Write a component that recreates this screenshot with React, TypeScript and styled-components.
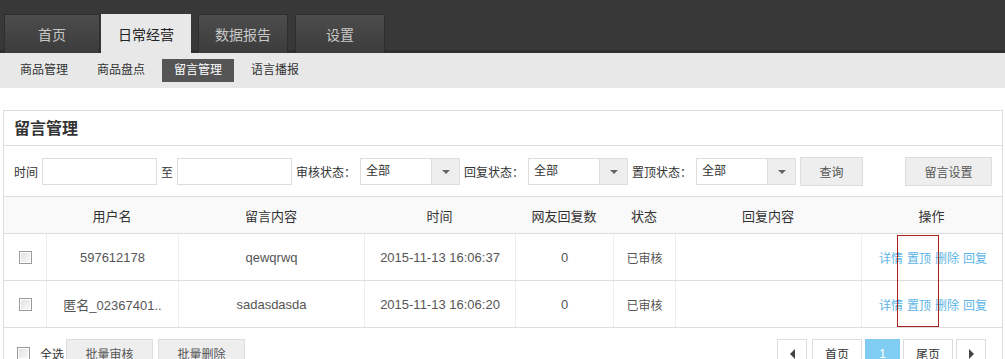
import { createGlobalStyle } from "styled-components"
import styled from "styled-components"

const GlobalStyle = createGlobalStyle`
    html, body {
        margin: 0;
        padding: 0;
        background: #fff;
        font-family: "Liberation Sans", "Noto Sans CJK SC", sans-serif;
        color: #333;
        overflow: hidden;
    }
`

const Page = styled.div`
    width: 1005px;
    height: 359px;
    overflow: hidden;
`

const TopBar = styled.div`
    height: 53px;
    background: #383838;
    display: flex;
    align-items: flex-end;
    padding-left: 4px;
    box-sizing: border-box;
    box-shadow: inset 0 -3px 0 #2f2f2f;
`

const Tab = styled.div<{ $active?: boolean, $w?: number, $gap?: number }>`
    width: ${p => p.$w || 90}px;
    margin-right: ${p => p.$gap ?? 7}px;
    height: 39px;
    display: flex;
    align-items: center;
    justify-content: center;
    font-size: 14px;
    box-sizing: border-box;
    color: ${p => p.$active ? "#222" : "#c8c8c8"};
    background: ${p => p.$active ? "#e8e8e8" : "linear-gradient(#4c4c4c, #3c3c3c)"};
    border: ${p => p.$active ? "none" : "1px solid #2e2e2e"};
    border-bottom: none;
`

const SubNav = styled.div`
    height: 35px;
    background: #e8e8e8;
    display: flex;
    align-items: center;
    padding-left: 8px;
    gap: 5px;
`

const SubItem = styled.div<{ $active?: boolean }>`
    width: 72px;
    height: 23px;
    line-height: 23px;
    text-align: center;
    font-size: 12px;
    color: ${p => p.$active ? "#fff" : "#333"};
    background: ${p => p.$active ? "#555" : "transparent"};
`

const Panel = styled.div`
    margin: 22px 2px 0 3px;
    border: 1px solid #ddd;
    border-bottom: none;
`

const PanelTitle = styled.div`
    height: 34px;
    line-height: 36px;
    padding-left: 10px;
    font-size: 16px;
    font-weight: bold;
    color: #333;
    border-bottom: 1px solid #ddd;
`

const Filter = styled.div`
    height: 50px;
    display: flex;
    align-items: center;
    gap: 4px;
    padding: 0 10px;
    border-bottom: 1px solid #ddd;
    font-size: 12px;
    color: #333;
`

const TextInput = styled.div`
    width: 115px;
    height: 27px;
    box-sizing: border-box;
    border: 1px solid #ddd;
    background: #fff;
`

const Select = styled.div`
    width: 100px;
    height: 27px;
    box-sizing: border-box;
    border: 1px solid #ddd;
    display: flex;
    font-size: 12px;
    color: #333;
`

const SelectValue = styled.div`
    flex: 1;
    padding-left: 5px;
    line-height: 25px;
`

const SelectArrow = styled.div`
    width: 27px;
    background: #eee;
    border-left: 1px solid #ddd;
    display: flex;
    align-items: center;
    justify-content: center;
    &::after {
        content: "";
        border-left: 4px solid transparent;
        border-right: 4px solid transparent;
        border-top: 4px solid #666;
        margin-top: 1px;
    }
`

const Button = styled.div<{ $w: number, $push?: boolean }>`
    width: ${p => p.$w}px;
    height: 29px;
    box-sizing: border-box;
    border: 1px solid #ddd;
    background: #eee;
    display: flex;
    align-items: center;
    justify-content: center;
    font-size: 12px;
    color: #555;
    margin-left: ${p => p.$push ? "auto" : "0"};
`

const columns = "42px 132px 186px 151px 98px 62px 186px 141px"

const HeadRow = styled.div`
    display: grid;
    grid-template-columns: ${columns};
    height: 36px;
    background: #f9f9f9;
    border-bottom: 1px solid #ddd;
    font-size: 13px;
    color: #333;
`

const HeadCell = styled.div`
    display: flex;
    align-items: center;
    justify-content: center;
`

const Body = styled.div`
    position: relative;
`

const Row = styled.div`
    display: grid;
    grid-template-columns: ${columns};
    height: 46px;
    border-bottom: 1px solid #ddd;
    font-size: 13px;
    color: #555;
`

const Cell = styled.div<{ $right?: boolean, $small?: boolean }>`
    display: flex;
    align-items: center;
    justify-content: ${p => p.$right ? "flex-end" : "center"};
    padding-right: ${p => p.$right ? "15px" : "0"};
    font-size: ${p => p.$small ? "12px" : "13px"};
    border-left: 1px solid #eee;
    &:first-child {
        border-left: none;
    }
`

const Check = styled.span`
    display: inline-block;
    width: 13px;
    height: 13px;
    box-sizing: border-box;
    border: 1px solid #9a9a9a;
    background: linear-gradient(135deg, #e0e0e0, #fafafa);
    box-shadow: inset 0 0 0 1px #fff;
`

const Actions = styled.div`
    display: flex;
    gap: 4px;
    color: #5bb4e5;
    font-size: 12px;
`

const Marker = styled.div`
    position: absolute;
    left: 893px;
    top: 1px;
    width: 40px;
    height: 90px;
    border: 1px solid #a8201a;
    pointer-events: none;
`

const Footer = styled.div`
    display: flex;
    align-items: flex-start;
    padding: 11px 16px 0 13px;
    font-size: 12px;
    color: #333;
`

const SelectAll = styled.div`
    display: flex;
    align-items: center;
    gap: 10px;
    height: 29px;
    margin-right: 2px;
`

const FooterButton = styled(Button)`
    margin-right: 5px;
`

const Pager = styled.div`
    display: flex;
    margin-left: auto;
    gap: 3px;
`

const PageBox = styled.div<{ $w: number, $active?: boolean }>`
    width: ${p => p.$w}px;
    height: 29px;
    box-sizing: border-box;
    border: 1px solid ${p => p.$active ? "#7fcdf3" : "#ddd"};
    background: ${p => p.$active ? "#7fcdf3" : "#fff"};
    color: ${p => p.$active ? "#fff" : "#333"};
    display: flex;
    align-items: center;
    justify-content: center;
    font-size: 12px;
`

const Tri = styled.span<{ $dir: "left" | "right" }>`
    width: 0;
    height: 0;
    border-top: 5px solid transparent;
    border-bottom: 5px solid transparent;
    ${p => p.$dir === "left" ? "border-right: 5px solid #444;" : "border-left: 5px solid #444;"}
`

const rows = [
    { user: "597612178", content: "qewqrwq", time: "2015-11-13 16:06:37" },
    { user: "匿名_02367401..", content: "sadasdasda", time: "2015-11-13 16:06:20" },
]

export default function App() {
    return (
        <Page>
            <GlobalStyle />
            <TopBar>
                <Tab $w={96} $gap={1}>首页</Tab>
                <Tab $active>日常经营</Tab>
                <Tab>数据报告</Tab>
                <Tab>设置</Tab>
            </TopBar>
            <SubNav>
                <SubItem>商品管理</SubItem>
                <SubItem>商品盘点</SubItem>
                <SubItem $active>留言管理</SubItem>
                <SubItem>语言播报</SubItem>
            </SubNav>
            <Panel>
                <PanelTitle>留言管理</PanelTitle>
                <Filter>
                    <span>时间</span>
                    <TextInput />
                    <span>至</span>
                    <TextInput />
                    <span>审核状态：</span>
                    <Select><SelectValue>全部</SelectValue><SelectArrow /></Select>
                    <span>回复状态：</span>
                    <Select><SelectValue>全部</SelectValue><SelectArrow /></Select>
                    <span>置顶状态：</span>
                    <Select><SelectValue>全部</SelectValue><SelectArrow /></Select>
                    <Button $w={63}>查询</Button>
                    <Button $w={87} $push>留言设置</Button>
                </Filter>
                <HeadRow>
                    <HeadCell />
                    <HeadCell>用户名</HeadCell>
                    <HeadCell>留言内容</HeadCell>
                    <HeadCell>时间</HeadCell>
                    <HeadCell>网友回复数</HeadCell>
                    <HeadCell>状态</HeadCell>
                    <HeadCell>回复内容</HeadCell>
                    <HeadCell>操作</HeadCell>
                </HeadRow>
                <Body>
                    {rows.map(r => (
                        <Row key={r.time}>
                            <Cell><Check /></Cell>
                            <Cell>{r.user}</Cell>
                            <Cell>{r.content}</Cell>
                            <Cell>{r.time}</Cell>
                            <Cell>0</Cell>
                            <Cell $small>已审核</Cell>
                            <Cell />
                            <Cell $right>
                                <Actions>
                                    <span>详情</span>
                                    <span>置顶</span>
                                    <span>删除</span>
                                    <span>回复</span>
                                </Actions>
                            </Cell>
                        </Row>
                    ))}
                    <Marker />
                </Body>
                <Footer>
                    <SelectAll>
                        <Check />
                        <span>全选</span>
                    </SelectAll>
                    <FooterButton $w={87}>批量审核</FooterButton>
                    <FooterButton $w={87}>批量删除</FooterButton>
                    <Pager>
                        <PageBox $w={30}><Tri $dir="left" /></PageBox>
                        <PageBox $w={50} style={{ marginLeft: 2 }}>首页</PageBox>
                        <PageBox $w={35} $active>1</PageBox>
                        <PageBox $w={50}>尾页</PageBox>
                        <PageBox $w={30}><Tri $dir="right" /></PageBox>
                    </Pager>
                </Footer>
            </Panel>
        </Page>
    )
}
